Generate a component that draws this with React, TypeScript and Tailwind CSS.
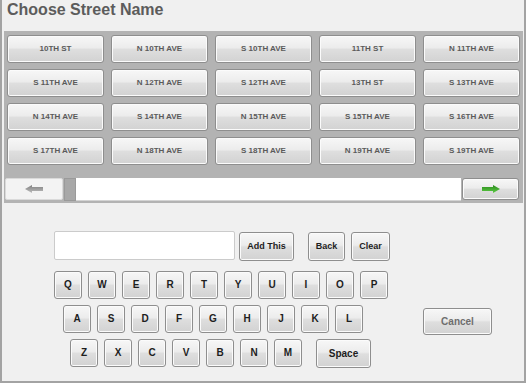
const STREETS = [
  ['10TH ST', 'N 10TH AVE', 'S 10TH AVE', '11TH ST', 'N 11TH AVE'],
  ['S 11TH AVE', 'N 12TH AVE', 'S 12TH AVE', '13TH ST', 'S 13TH AVE'],
  ['N 14TH AVE', 'S 14TH AVE', 'N 15TH AVE', 'S 15TH AVE', 'S 16TH AVE'],
  ['S 17TH AVE', 'N 18TH AVE', 'S 18TH AVE', 'N 19TH AVE', 'S 19TH AVE'],
];

const ROW_Q = ['Q', 'W', 'E', 'R', 'T', 'Y', 'U', 'I', 'O', 'P'];
const ROW_A = ['A', 'S', 'D', 'F', 'G', 'H', 'J', 'K', 'L'];
const ROW_Z = ['Z', 'X', 'C', 'V', 'B', 'N', 'M'];

const btn =
  'flex items-center justify-center border border-[#8e8e8e] rounded-[3px] bg-[linear-gradient(#f7f7f7,#ececec_45%,#dedede_52%,#d2d2d2)] shadow-[inset_0_0_0_1px_#fbfbfb] font-bold leading-none';

function Arrow({ dir, from, to }: { dir: 'left' | 'right'; from: string; to: string }) {
  const id = `g-${dir}`;
  return (
    <svg width="18" height="8" viewBox="0 0 18 8" className={dir === 'right' ? 'scale-x-[-1]' : ''}>
      <defs>
        <linearGradient id={id} x1="0" y1="0" x2="0" y2="1">
          <stop offset="0" stopColor={from} />
          <stop offset="1" stopColor={to} />
        </linearGradient>
      </defs>
      <path d="M0 4 L7 0 L7 2 L18 2 L18 6 L7 6 L7 8 Z" fill={`url(#${id})`} />
    </svg>
  );
}

function Key({ label }: { label: string }) {
  return <button className={`${btn} w-[28px] h-[28px] text-[10px] text-[#1e1e1e]`}>{label}</button>;
}

export default function App() {
  return (
    <div className="w-[526px] h-[383px] bg-[#f0f0f0] border-l-2 border-r-2 border-b-2 border-[#a3a3a3] flex flex-col overflow-hidden font-['Liberation_Sans',Arial,sans-serif]">
      <div className="h-[31px] pl-[5px] text-[16px] leading-[20px] font-bold text-[#5c5c5c]">Choose Street Name</div>

      <div className="ml-[2px] mr-[1px] h-[172px] bg-[#b3b3b3] flex flex-col">
        <div className="px-[3px] pt-[4px] flex flex-col gap-[6px]">
          {STREETS.map((row, r) => (
            <div key={r} className="flex gap-[7px]">
              {row.map((s, i) => (
                <button
                  key={s}
                  className={`${btn} w-[97px] h-[28px] text-[8px] text-[#5a5a5a] ${
                    r === 0 && i === 0 ? 'border-[#6db5d8] shadow-[inset_0_0_0_1px_#cde8f4]' : ''
                  }`}
                >
                  {s}
                </button>
              ))}
            </div>
          ))}
        </div>

        <div className="mt-[13px] pl-[1px] pr-[4px] flex h-[23px]">
          <button className="w-[58px] h-[22px] bg-[#f3f3f3] border border-[#dadada] rounded-[2px] flex items-center justify-center">
            <Arrow dir="left" from="#7e7e7e" to="#bdbdbd" />
          </button>
          <div className="ml-[1px] w-[12px] h-[23px] bg-[#a8a8a8] border border-[#9a9a9a]" />
          <div className="flex-1 h-[23px] bg-white border-b border-[#d4d4d4]" />
          <button className={`${btn} ml-[1px] w-[57px] h-[22px]`}>
            <Arrow dir="right" from="#2c8a1e" to="#5ccc44" />
          </button>
        </div>
      </div>

      <div className="flex pt-[28px] pl-[52px]">
        <div className="flex flex-col">
          <div className="flex items-start">
            <div className="w-[181px] h-[29px] bg-white border border-[#cbcbcb] rounded-[2px]" />
            <button className={`${btn} ml-[4px] mt-[1px] w-[55px] h-[29px] text-[9px] text-[#1e1e1e]`}>Add This</button>
            <button className={`${btn} ml-[14px] mt-[1px] w-[37px] h-[29px] text-[9px] text-[#1e1e1e]`}>Back</button>
            <button className={`${btn} ml-[6px] mt-[1px] w-[39px] h-[29px] text-[9px] text-[#1e1e1e]`}>Clear</button>
          </div>
          <div className="mt-[10px] flex gap-[6px]">
            {ROW_Q.map(k => <Key key={k} label={k} />)}
          </div>
          <div className="mt-[6px] ml-[9px] flex gap-[6px]">
            {ROW_A.map(k => <Key key={k} label={k} />)}
          </div>
          <div className="mt-[6px] ml-[16px] flex gap-[6px]">
            {ROW_Z.map(k => <Key key={k} label={k} />)}
            <button className={`${btn} ml-[8px] w-[55px] h-[29px] text-[10px] text-[#1e1e1e]`}>Space</button>
          </div>
        </div>
        <button className={`${btn} ml-[33px] mt-[77px] w-[69px] h-[27px] text-[10px] text-[#6e6e6e]`}>Cancel</button>
      </div>
    </div>
  );
}
